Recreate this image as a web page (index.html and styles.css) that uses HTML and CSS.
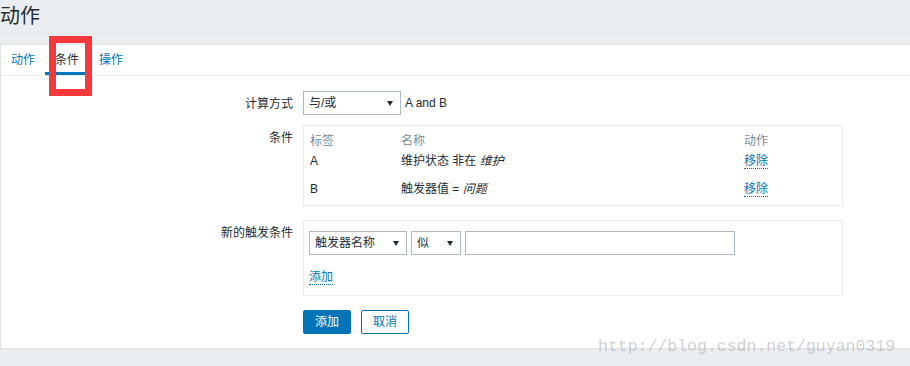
FILE: index.html
```html
<!DOCTYPE html>
<html lang="zh-CN">
<head>
  <meta charset="UTF-8">
  <meta name="viewport" content="width=device-width, initial-scale=1.0">
  <title>动作</title>
  <link rel="stylesheet" href="styles.css">
</head>
<body>
  <div class="header">
    <h1>动作</h1>
  </div>

  <div class="panel">
    <ul class="tabs">
      <li class="tab"><a href="#">动作</a></li>
      <li class="tab active"><a href="#">条件</a></li>
      <li class="tab"><a href="#">操作</a></li>
    </ul>

    <div class="tab-body">
      <ul class="form-list">
        <li class="form-row row-tight">
          <label class="form-label">计算方式</label>
          <div class="form-field inline">
            <div class="select select-type">
              <span>与/或</span>
              <svg class="caret" width="6" height="5" viewBox="0 0 6 5"><path d="M0 0h6L3 5z"/></svg>
            </div>
            <span class="expr">A and B</span>
          </div>
        </li>

        <li class="form-row">
          <label class="form-label">条件</label>
          <div class="form-field">
            <div class="box">
              <table class="cond-table">
                <thead>
                  <tr>
                    <th class="col-tag">标签</th>
                    <th class="col-name">名称</th>
                    <th>动作</th>
                  </tr>
                </thead>
                <tbody>
                  <tr>
                    <td>A</td>
                    <td>维护状态 非在 <em>维护</em></td>
                    <td><a class="link" href="#">移除</a></td>
                  </tr>
                  <tr>
                    <td>B</td>
                    <td>触发器值 = <em>问题</em></td>
                    <td><a class="link" href="#">移除</a></td>
                  </tr>
                </tbody>
              </table>
            </div>
          </div>
        </li>

        <li class="form-row">
          <label class="form-label">新的触发条件</label>
          <div class="form-field">
            <div class="box box-new">
              <div class="controls">
                <div class="select select-field">
                  <span>触发器名称</span>
                  <svg class="caret" width="6" height="5" viewBox="0 0 6 5"><path d="M0 0h6L3 5z"/></svg>
                </div>
                <div class="select select-op">
                  <span>似</span>
                  <svg class="caret" width="6" height="5" viewBox="0 0 6 5"><path d="M0 0h6L3 5z"/></svg>
                </div>
                <input type="text" class="input-value">
              </div>
              <div class="add-line"><a class="link" href="#">添加</a></div>
            </div>
          </div>
        </li>

        <li class="form-row row-buttons">
          <span class="form-label"></span>
          <div class="form-field buttons">
            <button class="btn btn-primary">添加</button>
            <button class="btn btn-alt">取消</button>
          </div>
        </li>
      </ul>
    </div>
  </div>

  <!-- screenshot annotation + watermark -->
  <div class="annotation"></div>
  <div class="watermark">http://blog.csdn.net/guyan0319</div>
</body>
</html>
```

FILE: styles.css
```css
/* Reset and base styles */
* {
  box-sizing: border-box;
  margin: 0;
  padding: 0;
}

:root {
  --blue: #0275b8;
  --text: #1f2c33;
  --muted: #768d99;
  --bg: #ebeef0;
  --line: #dfe4e7;
  --box-line: #ebeef0;
  --input-line: #acbbc2;
  --font: "Liberation Sans", Arial, "Noto Sans CJK SC", sans-serif;
}

body {
  position: relative;
  font-family: var(--font);
  font-size: 12px;
  line-height: 16px;
  color: var(--text);
  background-color: var(--bg);
  min-height: 366px;
}

a {
  color: var(--blue);
  text-decoration: none;
}

/* Header */
.header {
  height: 34px;
  border-bottom: 1px solid var(--line);
}

.header h1 {
  font-size: 20px;
  font-weight: 400;
  line-height: 33px;
  color: var(--text);
}

/* Panel */
.panel {
  margin-top: 10px;
  background-color: #fff;
  border: 1px solid var(--line);
  border-right: none;
}

.tabs {
  display: flex;
  list-style: none;
  height: 31px;
  border-bottom: 1px solid var(--box-line);
}

.tab a {
  display: block;
  height: 30px;
  line-height: 30px;
  padding: 0 10px;
}

.tab.active a {
  color: var(--text);
  border-bottom: 3px solid var(--blue);
}

.tab-body {
  padding: 15px 0 14px;
}

/* Form */
.form-list {
  list-style: none;
}

.form-row {
  display: grid;
  grid-template-columns: 292px 540px;
  column-gap: 10px;
  margin-bottom: 14px;
}

.form-row.row-tight {
  margin-bottom: 10px;
}

.form-row.row-buttons {
  margin-bottom: 0;
}

.form-label {
  text-align: right;
  padding-top: 5px;
}

.form-field.inline {
  display: flex;
  align-items: center;
  gap: 4px;
}

.select {
  display: flex;
  align-items: center;
  justify-content: space-between;
  height: 24px;
  padding: 0 7px 0 5px;
  background-color: #fff;
  border: 1px solid var(--input-line);
}

.caret {
  fill: var(--text);
}

.select-type {
  width: 98px;
}

.select-field {
  width: 98px;
}

.select-op {
  width: 50px;
}

.input-value {
  width: 270px;
  height: 24px;
  border: 1px solid var(--input-line);
  font: inherit;
}

/* Boxes */
.box {
  border: 1px solid var(--box-line);
  padding: 0 6px;
}

.cond-table {
  width: 100%;
  border-collapse: collapse;
}

.cond-table th {
  font-weight: 400;
  text-align: left;
  color: var(--muted);
  padding: 7px 0 0;
}

.cond-table td {
  padding: 4px 0 8px;
}

.col-tag {
  width: 91px;
}

.col-name {
  width: 343px;
}

.link {
  border-bottom: 1px dotted var(--blue);
}

.box-new {
  padding: 10px 5px 10px;
}

.controls {
  display: flex;
  gap: 4px;
}

.add-line {
  margin-top: 14px;
}

/* Buttons */
.buttons {
  display: flex;
  gap: 10px;
}

.btn {
  width: 48px;
  height: 24px;
  font: inherit;
  border-radius: 2px;
  cursor: pointer;
}

.btn-primary {
  color: #fff;
  background-color: var(--blue);
  border: 1px solid var(--blue);
}

.btn-alt {
  color: var(--blue);
  background-color: #fff;
  border: 1px solid var(--blue);
}

/* Overlays from the screenshot */
.annotation {
  position: absolute;
  left: 49px;
  top: 36px;
  width: 43px;
  height: 60px;
  border: 7px solid #f5393b;
}

.watermark {
  position: absolute;
  left: 598px;
  top: 337px;
  font-family: "Liberation Mono", monospace;
  font-size: 16.5px;
  line-height: 20px;
  color: rgba(150, 150, 150, 0.45);
  white-space: nowrap;
}
```
